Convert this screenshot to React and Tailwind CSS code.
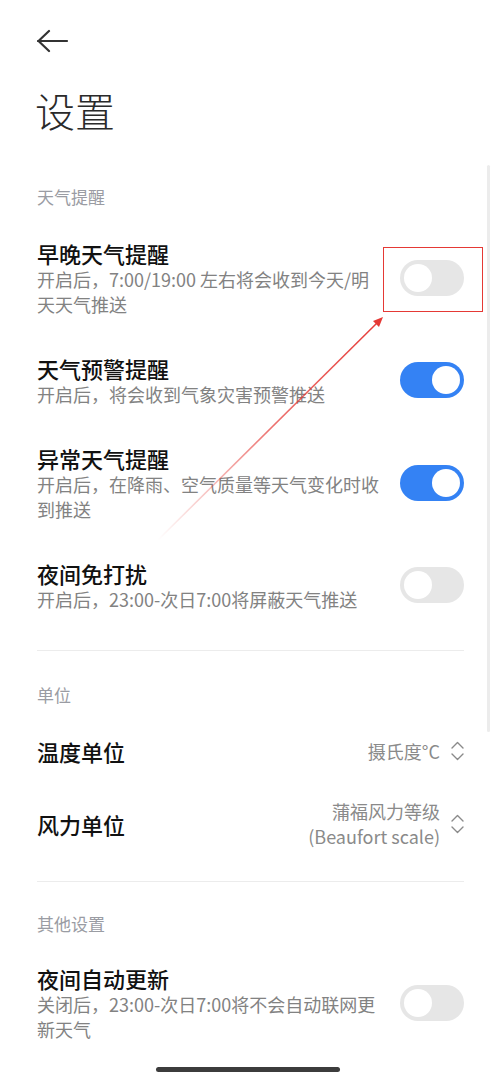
import React from "react";

const FONT = { fontFamily: '"Noto Sans CJK SC", "Noto Sans", sans-serif' };

function Toggle({ on }) {
  return (
    <div
      className={`w-[64px] h-[36px] rounded-full flex items-center px-[4px] shrink-0 ${
        on ? "bg-[#3482f4] justify-end" : "bg-[#e6e6e6] justify-start"
      }`}
    >
      <div className="w-[28px] h-[28px] rounded-full bg-white" />
    </div>
  );
}

function Chevrons() {
  return (
    <svg width="13" height="22" viewBox="0 0 13 22" className="shrink-0">
      <path d="M1 8 L6.5 2.5 L12 8" fill="none" stroke="#8a8a8a" strokeWidth="1.4" strokeLinecap="round" strokeLinejoin="round" />
      <path d="M1 14 L6.5 19.5 L12 14" fill="none" stroke="#8a8a8a" strokeWidth="1.4" strokeLinecap="round" strokeLinejoin="round" />
    </svg>
  );
}

function SwitchRow({ title, lines, on }) {
  return (
    <div className="flex items-center py-[18.5px]">
      <div className="w-[347px] mr-[16px]">
        <div className="text-[22px] leading-[28px] font-medium text-[#111]">{title}</div>
        <div className="text-[18px] leading-[25px] text-[#828282]">
          {lines.map((l, i) => (
            <div key={i} className="whitespace-nowrap">{l}</div>
          ))}
        </div>
      </div>
      <Toggle on={on} />
    </div>
  );
}

function SectionHeader({ children }) {
  return <div className="text-[17px] leading-[24px] text-[#9a9ca3]">{children}</div>;
}

export default function App() {
  return (
    <div className="relative w-[500px] h-[1080px] overflow-hidden bg-white" style={FONT}>
      <div className="px-[37px] pr-[36px]">
        {/* back arrow */}
        <div className="h-[82px] flex items-center">
          <svg width="32" height="24" viewBox="0 0 32 24">
            <path d="M1 12 H30" stroke="#333" strokeWidth="2.2" strokeLinecap="round" fill="none" />
            <path d="M12 2 L1.5 12 L12 22" stroke="#333" strokeWidth="2.2" strokeLinecap="round" strokeLinejoin="round" fill="none" />
          </svg>
        </div>
        <div className="text-[40px] leading-[56px] font-light text-[#2a2a2a] -ml-[2px]">设置</div>

        <div className="mt-[47px]">
          <SectionHeader>天气提醒</SectionHeader>
        </div>
        <div className="mt-[11px]">
          <SwitchRow
            title="早晚天气提醒"
            lines={["开启后，7:00/19:00 左右将会收到今天/明", "天天气推送"]}
            on={false}
          />
          <SwitchRow title="天气预警提醒" lines={["开启后，将会收到气象灾害预警推送"]} on={true} />
          <SwitchRow
            title="异常天气提醒"
            lines={["开启后，在降雨、空气质量等天气变化时收", "到推送"]}
            on={true}
          />
          <SwitchRow title="夜间免打扰" lines={["开启后，23:00-次日7:00将屏蔽天气推送"]} on={false} />
        </div>

        <div className="mt-[20px] h-px bg-[#ececec]" />

        <div className="mt-[32px]">
          <SectionHeader>单位</SectionHeader>
        </div>

        <div className="mt-[13px] h-[62px] flex items-center justify-between">
          <div className="text-[22px] leading-[28px] font-medium text-[#111]">温度单位</div>
          <div className="flex items-center gap-[11px]">
            <div className="text-[18px] leading-[25px] text-[#8a8a8a]">摄氏度°C</div>
            <Chevrons />
          </div>
        </div>

        <div className="py-[17px] flex items-center justify-between">
          <div className="text-[22px] leading-[28px] font-medium text-[#111]">风力单位</div>
          <div className="flex items-center gap-[11px]">
            <div className="text-[18px] leading-[25px] text-[#8a8a8a] text-right">
              <div>蒲福风力等级</div>
              <div>(Beaufort scale)</div>
            </div>
            <Chevrons />
          </div>
        </div>

        <div className="mt-[15px] h-px bg-[#ececec]" />

        <div className="mt-[30px]">
          <SectionHeader>其他设置</SectionHeader>
        </div>
        <div className="mt-[9px]">
          <SwitchRow
            title="夜间自动更新"
            lines={["关闭后，23:00-次日7:00将不会自动联网更", "新天气"]}
            on={false}
          />
        </div>
      </div>

      {/* scrollbar */}
      <div className="absolute left-[487px] top-[165px] w-[3px] h-[567px] rounded-full bg-[#ececec]" />

      {/* annotation box */}
      <div className="absolute left-[383px] top-[247px] w-[100px] h-[65px] border border-[#e53935]" />

      {/* annotation arrow */}
      <svg className="absolute left-0 top-0 pointer-events-none" width="500" height="1080" viewBox="0 0 500 1080">
        <defs>
          <linearGradient id="arrowGrad" x1="158" y1="540" x2="382" y2="318" gradientUnits="userSpaceOnUse">
            <stop offset="0" stopColor="#e53935" stopOpacity="0" />
            <stop offset="0.5" stopColor="#e53935" stopOpacity="0.7" />
            <stop offset="1" stopColor="#e53935" stopOpacity="1" />
          </linearGradient>
        </defs>
        <line x1="158" y1="540" x2="378" y2="322" stroke="url(#arrowGrad)" strokeWidth="1.5" />
        <polygon points="383,317 373,321 379,327" fill="#e53935" />
      </svg>

      {/* home indicator */}
      <div className="absolute left-[156px] top-[1067px] w-[184px] h-[5px] rounded-full bg-[#3c3c3c]" />
    </div>
  );
}
